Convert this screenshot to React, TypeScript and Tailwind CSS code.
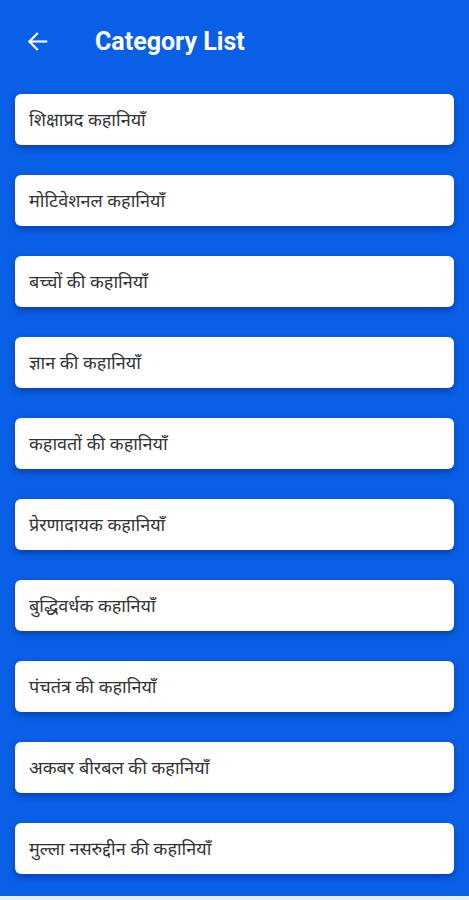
import React from "react";

const items = [
  "शिक्षाप्रद कहानियाँ",
  "मोटिवेशनल कहानियाँ",
  "बच्चों की कहानियाँ",
  "ज्ञान की कहानियाँ",
  "कहावतों की कहानियाँ",
  "प्रेरणादायक कहानियाँ",
  "बुद्धिवर्धक कहानियाँ",
  "पंचतंत्र की कहानियाँ",
  "अकबर बीरबल की कहानियाँ",
  "मुल्ला नसरुद्दीन की कहानियाँ",
];

export default function App() {
  return (
    <div className="w-[469px] h-[900px] bg-[#0a5fe7] flex flex-col overflow-hidden" style={{ fontFamily: "Roboto, 'Noto Sans', sans-serif" }}>
      <div className="h-[82px] flex items-center shrink-0">
        <div className="w-[95px] flex items-center pl-[26px]">
          <svg width="23" height="23" viewBox="0 0 24 24" fill="none" stroke="white" strokeWidth="2.2" strokeLinecap="square">
            <path d="M21 12H4" />
            <path d="M11.5 4L3.5 12L11.5 20" strokeLinejoin="miter" />
          </svg>
        </div>
        <div className="text-white text-[25px] font-bold leading-none">Category List</div>
      </div>
      <div className="flex flex-col gap-[30px] px-[15px] pt-[12px]">
        {items.map((t) => (
          <div
            key={t}
            className="h-[51px] bg-white rounded-[6px] flex items-center px-[14px] pt-[3px] shadow-[0_3px_6px_rgba(0,20,80,0.4)]"
          >
            <span className="text-[18px] text-[#333333]" style={{ fontFamily: "'Noto Sans Devanagari', 'Noto Sans', 'Lohit Devanagari', sans-serif" }}>{t}</span>
          </div>
        ))}
      </div>
      <div className="flex-1" />
      <div className="h-[4px] bg-[#e6ebf5] shrink-0" />
    </div>
  );
}
